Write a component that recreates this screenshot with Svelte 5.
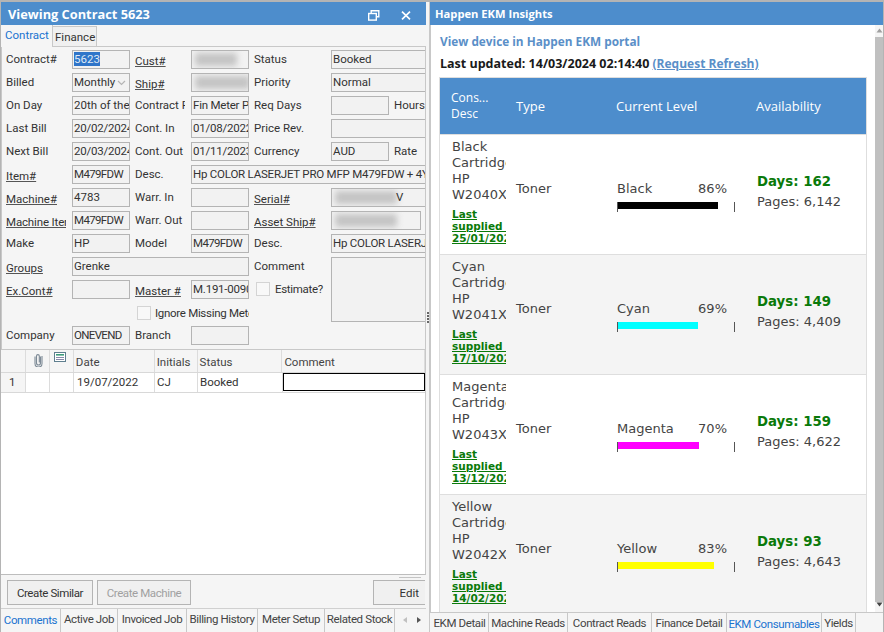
<script>
  const tabsL = ['Active Job','Invoiced Job','Billing History','Meter Setup','Related Stock'];
  const tabsLw = [57,69,71,67,70];
  const tabsR = [['EKM Detail',58],['Machine Reads',79],['Contract Reads',84],['Finance Detail',75],['EKM Consumables',95,true],['Yields',34]];
  const items = [
    {a:'Black',b:'W2040X',d:'25/01/20',lvl:'Black',pct:86,days:162,pages:'6,142',c:'#000000'},
    {a:'Cyan',b:'W2041X',d:'17/10/20',lvl:'Cyan',pct:69,days:149,pages:'4,409',c:'#00ffff'},
    {a:'Magenta',b:'W2043X',d:'13/12/20',lvl:'Magenta',pct:70,days:159,pages:'4,622',c:'#ff00ff'},
    {a:'Yellow',b:'W2042X',d:'14/02/20',lvl:'Yellow',pct:83,days:93,pages:'4,643',c:'#ffff00'}
  ];
  const cols = [['',25],['clip',24],['note',24],['Date',81],['Initials',43],['Status',85],['Comment',143]];
</script>

<div class="screen">
  <section class="left">
    <header class="title">
      <span>Viewing Contract 5623</span>
      <svg class="restore" width="12" height="11" viewBox="0 0 12 11" fill="none" stroke="#fff" stroke-width="1.4"><rect x="0.7" y="3.5" width="7.6" height="6.6"/><path d="M3.2 3.2V0.8H10.8V6.8H8.5"/></svg>
      <svg class="close" width="10" height="9" viewBox="0 0 10 9" fill="none" stroke="#fff" stroke-width="1.7"><path d="M1 0.7L9 8.3M9 0.7L1 8.3"/></svg>
    </header>
    <nav class="toptabs">
      <span class="tt active">Contract</span><span class="tt">Finance</span>
    </nav>
    <div class="form">
      <span class="l a">Contract#</span><span class="f sel"><b>5623</b></span>
      <span class="l p u up">Cust#</span><span class="f"><i class="blur short"></i></span>
      <span class="l p">Status</span><span class="f w">Booked</span>

      <span class="l a">Billed</span><span class="f">Monthly<svg class="chev" width="9" height="6" viewBox="0 0 9 6" fill="none" stroke="#b5b5b5" stroke-width="1.2"><path d="M1 1l3.5 3.5L8 1"/></svg></span>
      <span class="l p u up">Ship#</span><span class="f"><i class="blur"></i></span>
      <span class="l p">Priority</span><span class="f w">Normal</span>

      <span class="l a">On Day</span><span class="f">20th of the month</span>
      <span class="l p">Contract P</span><span class="f dg">Fin Meter Plan</span>
      <span class="l p">Req Days</span><span class="f"></span><span class="l side">Hours</span>

      <span class="l a">Last Bill</span><span class="f dg">20/02/2024</span>
      <span class="l p">Cont. In</span><span class="f dg">01/08/2022</span>
      <span class="l p">Price Rev.</span><span class="f w"></span>

      <span class="l a">Next Bill</span><span class="f dg">20/03/2024</span>
      <span class="l p">Cont. Out</span><span class="f dg">01/11/2023</span>
      <span class="l p">Currency</span><span class="f">AUD</span><span class="l side">Rate</span>

      <span class="l a u up">Item#</span><span class="f cap">M479FDW</span>
      <span class="l p">Desc.</span><span class="f w3 dg">Hp COLOR LASERJET PRO MFP M479FDW + 4YR WARRANTY</span>

      <span class="l a u up">Machine#</span><span class="f">4783</span>
      <span class="l p">Warr. In</span><span class="f"></span>
      <span class="l p u up">Serial#</span><span class="f w"><i class="blur wide"></i><em class="tail">V</em></span>

      <span class="l a u up mi">Machine Item</span><span class="f cap">M479FDW</span>
      <span class="l p">Warr. Out</span><span class="f"></span>
      <span class="l p u up">Asset Ship#</span><span class="f asset"><i class="blur wide"></i></span>

      <span class="l a">Make</span><span class="f">HP</span>
      <span class="l p">Model</span><span class="f cap">M479FDW</span>
      <span class="l p">Desc.</span><span class="f w dg">Hp COLOR LASERJET PRO MFP</span>

      <span class="l a u up">Groups</span><span class="f w2">Grenke</span>
      <span class="l p">Comment</span><span class="f comment"></span>

      <span class="l a u up">Ex.Cont#</span><span class="f"></span>
      <span class="l p u up">Master #</span><span class="f dg">M.191-00901</span>
      <span class="check est"><i class="box"></i>Estimate?</span>

      <span class="check ign"><i class="box"></i>Ignore Missing Meter</span>

      <span class="l a nl">Company</span><span class="f cap">ONEVEND</span>
      <span class="l p">Branch</span><span class="f"></span>
    </div>

    <div class="grid">
      <div class="ghead">
        {#each cols as c}
          <span class="gh" style="width:{c[1]}px">
            {#if c[0]==='clip'}
              <svg width="9" height="14" viewBox="0 0 9 14" fill="none" stroke="#7d8a96" stroke-width="1.1"><path d="M6.5 3.5V10a2 2 0 0 1-4 0V3a1.4 1.4 0 0 1 2.8 0v6.5"/><path d="M8 3v7.5a3.5 3.5 0 0 1-7 0V3.5"/></svg>
            {:else if c[0]==='note'}
              <svg class="note" width="12" height="10" viewBox="0 0 12 10"><rect x="0.5" y="0.5" width="11" height="9" fill="#fff" stroke="#5f7f8f"/><rect x="2" y="2" width="8" height="1.6" fill="#3d9b7b"/><rect x="2" y="5" width="8" height="1" fill="#88a"/><rect x="2" y="7" width="8" height="1" fill="#88a"/></svg>
            {:else}{c[0]}{/if}
          </span>
        {/each}
      </div>
      <div class="grow">
        <span class="gc num" style="width:25px">1</span>
        <span class="gc" style="width:24px"></span>
        <span class="gc" style="width:24px"></span>
        <span class="gc date" style="width:81px">19/07/2022</span>
        <span class="gc" style="width:43px">CJ</span>
        <span class="gc" style="width:85px">Booked</span>
        <span class="gc cur" style="width:142px"></span>
      </div>
    </div>

    <div class="actions">
      <i class="stub"></i>
      <button>Create Similar</button>
      <button class="dis">Create Machine</button>
      <button class="edit">Edit</button>
    </div>
    <nav class="bottabs">
      <span class="bt active" style="width:60px">Comments</span>
      {#each tabsL as t, i}<span class="bt" style="width:{tabsLw[i]}px">{t}</span>{/each}
      <span class="arrows"><i class="al"></i><i class="ar"></i></span>
    </nav>
  </section>

  <div class="splitter"><i></i><i></i><i></i><i></i></div>

  <section class="right">
    <header class="title rt"><span>Happen EKM Insights</span></header>
    <div class="viewport">
      <div class="content">
        <a class="portal">View device in Happen EKM portal</a>
        <p class="upd"><span class="stamp">Last updated: 14/03/2024 02:14:40</span> <a>(Request Refresh)</a></p>
        <div class="table">
          <div class="thead">
            <span class="c1">Cons...<br>Desc</span><span class="c2">Type</span><span class="c3">Current Level</span><span class="c4">Availability</span>
          </div>
          {#each items as it, i}
            <div class="row" class:alt={i%2===1}>
              <div class="c1 desc">
                <div class="dn">{it.a}<br>Cartridge<br>HP<br>{it.b}</div>
                <a class="sup">Last<br>supplied on<br>{it.d}24</a>
              </div>
              <div class="c2 mid">Toner</div>
              <div class="c3 mid lvl">
                <div class="lv"><span>{it.lvl}</span><span>{it.pct}%</span></div>
                <div class="track"><div class="fill" style="width:{it.pct}%;background:{it.c}"></div></div>
              </div>
              <div class="c4 mid av">
                <div class="days">Days: {it.days}</div>
                <div class="pages">Pages: {it.pages}</div>
              </div>
            </div>
          {/each}
        </div>
      </div>
      <div class="scroll">
        <svg class="up2" width="7" height="5" viewBox="0 0 7 5"><path d="M3.5 0.5L6.5 4.5H0.5z" fill="#a0a0a0"/></svg>
        <div class="thumb"></div>
        <svg class="dn2" width="7" height="5" viewBox="0 0 7 5"><path d="M3.5 4.5L6.5 0.5H0.5z" fill="#444"/></svg>
      </div>
    </div>
    <nav class="rtabs">
      {#each tabsR as t}<span class="bt" class:active={t[2]} style="width:{t[1]}px">{t[0]}</span>{/each}
      <span class="rest"></span>
    </nav>
  </section>
</div>

<style>
  :global(body){margin:0;background:#fff;}
  .screen{width:884px;height:632px;display:flex;overflow:hidden;border-top:2px solid #b4b4b4;box-sizing:border-box;font-family:Roboto,"Noto Sans",sans-serif;font-size:11.5px;color:#333;background:#f0f0f0;}
  .left{width:426px;flex:none;display:flex;flex-direction:column;box-sizing:border-box;border-left:1px solid #b4b4b4;background:#f5f5f5;overflow:hidden;}
  .title{height:23px;background:#4d8dcc;color:#fff;font-family:"Open Sans",sans-serif;font-weight:700;font-size:12.8px;display:flex;align-items:center;padding-left:7px;flex:none;}
  .title span{flex:1;}
  .restore{margin-right:21px;margin-top:3px;}
  .close{margin-right:15px;margin-top:3px;}
  .toptabs{height:22px;display:flex;align-items:flex-end;flex:none;border-bottom:1px solid #c8c8c8;box-sizing:border-box;}
  .tt{height:20px;line-height:21px;border:1px solid #c8c8c8;border-bottom:0;box-sizing:border-box;background:#f0f0f0;}
  .tt.active{height:22px;color:#1a73d0;background:#f5f5f5;border-left:0;border-top:0;width:52px;padding-left:4px;margin-bottom:-1px;line-height:21px;}
  .tt:not(.active){border-left:0;width:44px;padding-left:2px;}
  .form{display:grid;grid-template-columns:67px 58px 61px 58px 82px 58px 1fr;grid-auto-rows:19px;row-gap:4px;padding:3px 0 0 3px;height:303px;box-sizing:border-box;align-content:start;border-bottom:1px solid #c8c8c8;border-right:1px solid #c8c8c8;border-left:1px solid #c8c8c8;flex:none;overflow:hidden;}
  .l{white-space:nowrap;overflow:hidden;line-height:18px;color:#333;}
  .l.a{padding-left:1px;margin-right:6px;}
  .l.mi{letter-spacing:-.15px;}
  .l.p{padding-left:5px;margin-right:6px;}
  .l.u{text-decoration:underline;text-decoration-color:#555;}
  .l.up{line-height:22px;height:21px;}
  .l.side{padding-left:5px;}
  .nl{grid-column-start:1;}
  .f{border:1px solid #b4b4b4;background:#f2f2f2;padding-left:1px;line-height:16px;white-space:nowrap;overflow:hidden;box-sizing:border-box;position:relative;color:#333;}
  .f.dg{letter-spacing:-.22px;}
  .f.cap{letter-spacing:-.65px;}
  .f.w{grid-column:span 2;margin-right:-40px;border-right:0;}
  .f.w3{grid-column:span 4;margin-right:-40px;border-right:0;}
  .f.w2{grid-column:span 3;}
  .f.asset{grid-column:span 2;margin-right:4px;}
  .f.comment{grid-column:span 2;grid-row:span 3;margin-right:-40px;border-right:0;}
  .sel b{font-weight:400;background:#2f75c9;color:#dfe9f5;}
  .chev{position:absolute;right:3px;top:6px;}
  .blur{display:block;height:13px;background:#c4c4c4;filter:blur(3px);margin:2px 0 0 2px;width:100%;}
  .blur.short{width:42px;}
  .blur.wide{width:62px;}
  .tail{position:absolute;left:64px;top:0;font-style:normal;}
  .check{display:flex;align-items:center;white-space:nowrap;line-height:18px;overflow:hidden;letter-spacing:-.3px;}
  .box{display:block;width:12px;height:12px;border:1px solid #d4d4d4;background:#f8f8f8;flex:none;margin-right:5px;}
  .est{grid-column:5;padding-left:7px;margin-top:-2px;}
  .ign{grid-column:3 / span 2;padding-left:7px;}
  .ign .box{margin-right:4px;}
  .grid{flex:1;background:#fff;min-height:0;border-bottom:1px solid #bdbdbd;border-right:1px solid #c8c8c8;}
  .ghead{display:flex;height:23px;background:#f5f5f5;border-bottom:1px solid #d8d8d8;box-sizing:border-box;}
  .gh{box-sizing:border-box;border-right:1px solid #dcdcdc;padding-left:2px;line-height:24px;position:relative;color:#444;white-space:nowrap;}
  .gh svg{position:absolute;left:8px;top:3px;}
  .gh svg.note{left:4px;top:2px;}
  .grow{display:flex;height:19px;border-bottom:1px solid #d8d8d8;}
  .gc{box-sizing:border-box;border-right:1px solid #dcdcdc;padding-left:2px;line-height:18px;white-space:nowrap;}
  .gc.date{padding-left:3px;}
  .gc.num{background:#f5f5f5;padding-left:8px;}
  .gc.cur{border:1px solid #000;height:18px;background:#fff;}
  .actions{height:33px;flex:none;display:flex;align-items:flex-start;padding:5px 0 0 6px;gap:4px;box-sizing:border-box;position:relative;overflow:hidden;}
  .stub{position:absolute;right:5px;top:2px;width:22px;height:1px;background:#c4c4c4;}
  button{height:25px;border:1px solid #b4b4b4;background:#f0f0f0;font:inherit;font-size:11.5px;letter-spacing:-.4px;color:#333;padding:0;width:86px;box-sizing:border-box;}
  button.dis{width:94px;color:#a0a0a0;}
  button.edit{margin-left:auto;width:52px;text-align:right;padding-right:6px;margin-right:1px;border-right:0;letter-spacing:0;}
  .bottabs{height:24px;flex:none;display:flex;border-top:1px solid #d0d0d0;box-sizing:border-box;background:#f5f5f5;position:relative;overflow:hidden;}
  .bt{box-sizing:border-box;border-right:1px solid #c8c8c8;height:100%;text-align:center;white-space:nowrap;overflow:hidden;line-height:21px;font-size:11.5px;letter-spacing:-.38px;color:#444;flex:none;}
  .bt.active{color:#1a73d0;line-height:23px;}
  .arrows{margin-left:8px;display:flex;gap:10px;align-items:center;padding-bottom:1px;}
  .al,.ar{display:block;width:0;height:0;border-top:3.5px solid transparent;border-bottom:3.5px solid transparent;}
  .al{border-right:4px solid #c0c0c0;}
  .ar{border-left:4px solid #555;}
  .splitter{flex:none;width:3px;background:#f5f5f5;display:flex;flex-direction:column;align-items:center;justify-content:center;gap:1px;border-right:1px solid #c8c8c8;}
  .splitter i{display:block;width:2px;height:2px;background:#666;}
  .right{flex:1;display:flex;flex-direction:column;min-width:0;border-right:1px solid #b4b4b4;box-sizing:border-box;background:#fff;}
  .rt{font-size:11.2px;padding-left:5px;height:23px;}
  .viewport{flex:1;display:flex;min-height:0;border-left:1px solid #c8c8c8;overflow:hidden;}
  .content{flex:1;min-width:0;padding:7px 8px 0 8px;overflow:hidden;background:#fff;font-family:"Open Sans",sans-serif;}
  .portal{display:block;color:#5a8fc8;font-weight:700;font-size:11.8px;line-height:18px;margin-left:1px;}
  .upd{margin:5px 0 0 1px;color:#1a1a1a;font-weight:700;font-size:12px;line-height:18px;height:22px;}
  .stamp{font-size:12.5px;}
  .upd a{color:#5a8fc8;text-decoration:underline;}
  .table{border:1px solid #dedede;font-family:"DejaVu Sans",sans-serif;font-size:13px;color:#444;}
  .thead{display:flex;height:56px;background:#4d8dcc;color:#fff;align-items:center;font-size:13px;line-height:16px;font-family:"Open Sans",sans-serif;}
  .thead span{box-sizing:border-box;}
  .thead .c1{font-size:12px;}
  .thead .c3{padding-left:10px;}
  .c1{width:66px;padding-left:11px;box-sizing:border-box;flex:none;overflow:hidden;white-space:nowrap;}
  .c2{width:100px;padding-left:10px;box-sizing:border-box;flex:none;}
  .c3{width:140px;padding-left:11px;box-sizing:border-box;flex:none;}
  .c4{flex:1;padding-left:10px;box-sizing:border-box;}
  .row{display:flex;height:120px;box-sizing:border-box;border-top:1px solid #dedede;background:#fff;}
  .row.alt{background:#f4f4f4;}
  .desc{padding-top:4px;padding-left:12px;}
  .dn{line-height:16px;}
  .sup{display:block;margin-top:5px;font-size:10.5px;line-height:12px;font-weight:700;color:#0a7a0a;text-decoration:underline;}
  .mid{display:flex;flex-direction:column;justify-content:center;padding-bottom:13px;}
  .mid.lvl{padding-bottom:0;padding-top:3px;}
  .mid.av{padding-bottom:7px;padding-left:11px;}
  .lv{display:flex;justify-content:space-between;width:110px;line-height:16px;}
  .track{width:118px;height:10px;border-left:1px solid #555;border-right:1px solid #555;box-sizing:border-box;margin-top:5px;}
  .fill{height:7px;}
  .days{font-weight:700;color:#0a7a0a;line-height:18px;font-size:13.3px;}
  .pages{line-height:16px;margin-top:3px;color:#444;}
  .scroll{width:8px;flex:none;background:#f5f5f5;position:relative;display:flex;flex-direction:column;align-items:center;}
  .up2{margin-top:3px;}
  .thumb{width:8px;flex:1;background:#c0c0c0;margin:4px 0 10px;}
  .dn2{position:absolute;bottom:5px;}
  .rtabs{height:20px;flex:none;display:flex;border-top:1px solid #c8c8c8;box-sizing:border-box;background:#f5f5f5;padding-left:1px;}
  .rest{flex:1;}
</style>
